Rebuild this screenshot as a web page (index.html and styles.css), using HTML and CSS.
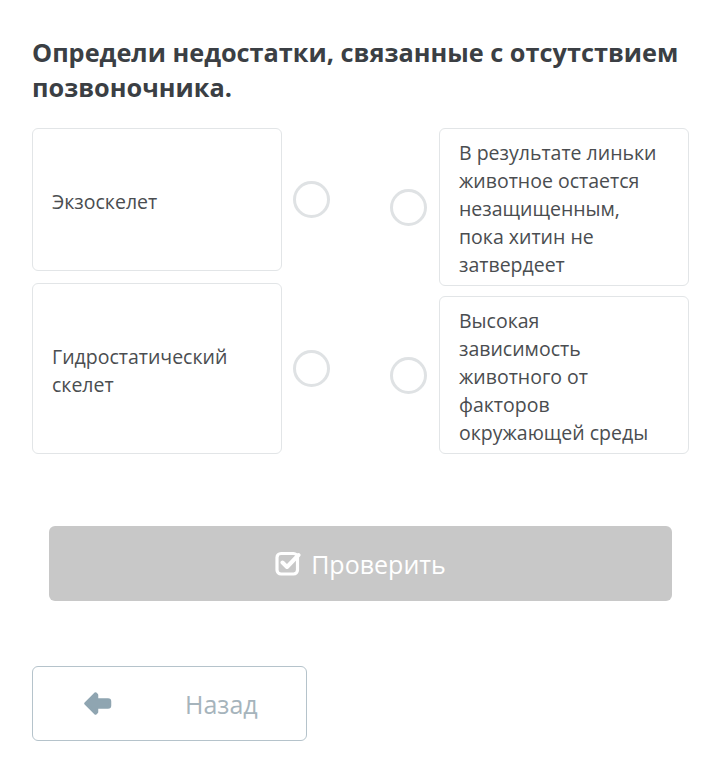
FILE: index.html
```html
<!DOCTYPE html>
<html lang="ru">
<head>
  <meta charset="UTF-8">
  <meta name="viewport" content="width=device-width, initial-scale=1.0">
  <title>Сопоставление</title>
  <link rel="stylesheet" href="styles.css">
</head>
<body>
  <div class="page">
    <h1 class="question">Определи недостатки, связанные с отсутствием позвоночника.</h1>

    <div class="match">
      <div class="match-col left">
        <div class="match-item item-a">
          <div class="card">Экзоскелет</div>
          <span class="dot"></span>
        </div>
        <div class="match-item item-b">
          <div class="card">Гидростатический<br>скелет</div>
          <span class="dot"></span>
        </div>
      </div>

      <div class="match-col right">
        <div class="match-item">
          <span class="dot"></span>
          <div class="card">В результате линьки<br>животное остается<br>незащищенным,<br>пока хитин не<br>затвердеет</div>
        </div>
        <div class="match-item">
          <span class="dot"></span>
          <div class="card">Высокая<br>зависимость<br>животного от<br>факторов<br>окружающей среды</div>
        </div>
      </div>
    </div>

    <button class="check-btn" disabled>
      <svg class="check-icon" viewBox="0 0 26 26" width="26" height="26">
        <rect x="2" y="3.5" width="20.5" height="20.5" rx="4" fill="none" stroke="#fff" stroke-width="3.2"/>
        <path d="M7.5 12.5 L12 17 L23.5 5" fill="none" stroke="#fff" stroke-width="4" stroke-linecap="round" stroke-linejoin="round"/>
      </svg>
      Проверить
    </button>

    <button class="back-btn">
      <svg class="back-icon" viewBox="0 0 28 23" width="28" height="23">
        <path d="M1.5 11.5 L11.5 1.5 L13 3 L13 7.5 L24 7.5 Q26 7.5 26 9.5 L26 13.5 Q26 15.5 24 15.5 L13 15.5 L13 20 L11.5 21.5 Z" fill="#8fa5b1" stroke="#8fa5b1" stroke-width="2.5" stroke-linejoin="round"/>
      </svg>
      <span class="back-text">Назад</span>
    </button>
  </div>
</body>
</html>
```

FILE: styles.css
```css
body {
  margin: 0;
  background: #fff;
  font-family: "Open Sans", "Liberation Sans", sans-serif;
}
.page {
  padding: 35px 0 0 32px;
}
.question {
  margin: 0;
  font-size: 25.3px;
  line-height: 35px;
  font-weight: 700;
  color: #3b3f44;
  width: 670px;
}
.match {
  display: flex;
  gap: 60px;
  margin-top: 23px;
}
.match-col {
  display: flex;
  flex-direction: column;
}
.match-col.left {
  gap: 12px;
}
.match-col.right {
  gap: 10px;
}
.match-item {
  display: flex;
  align-items: center;
  gap: 11px;
}
.match-col.right .match-item {
  gap: 12px;
}
.card {
  width: 250px;
  box-sizing: border-box;
  border: 1px solid #e2e5e7;
  border-radius: 6px;
  padding: 10px 12px 6px 19px;
  font-size: 19.5px;
  line-height: 28px;
  color: #4a4d50;
  white-space: nowrap;
  display: flex;
  align-items: center;
}
.item-a .card {
  height: 143px;
}
.item-b .card {
  height: 171px;
}
.dot {
  width: 37px;
  height: 37px;
  box-sizing: border-box;
  border: 3px solid #dfe2e4;
  border-radius: 50%;
  flex: none;
}
.check-btn {
  display: flex;
  align-items: center;
  justify-content: center;
  gap: 10px;
  width: 623px;
  height: 75px;
  margin: 72px 0 0 17px;
  border: none;
  border-radius: 6px;
  background: #c8c8c8;
  color: #fff;
  font-family: "Open Sans", "Liberation Sans", sans-serif;
  font-size: 25px;
  padding: 0;
}
.check-icon {
  margin-top: -2px;
}
.back-btn {
  display: flex;
  align-items: center;
  width: 275px;
  height: 75px;
  margin-top: 65px;
  padding: 0 0 0 51px;
  box-sizing: border-box;
  border: 1px solid #b5c3cb;
  border-radius: 6px;
  background: #fff;
  font-family: "Open Sans", "Liberation Sans", sans-serif;
  font-size: 25px;
  color: #a6b4bc;
}
.back-text {
  margin-left: 73px;
}
```
